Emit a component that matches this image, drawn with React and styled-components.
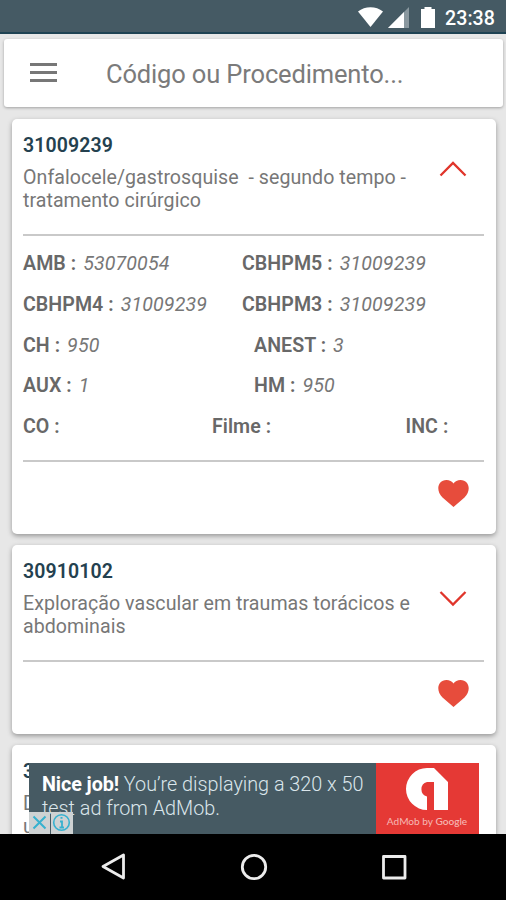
import React from 'react';
import styled, { createGlobalStyle } from 'styled-components';

const GlobalStyle = createGlobalStyle`
  * { box-sizing: border-box; }
  body { margin: 0; background: #e7e7e7; font-family: Roboto, sans-serif; }
`;

const Screen = styled.div`
  position: relative;
  display: flex;
  flex-direction: column;
  width: 506px;
  height: 900px;
  overflow: hidden;
  background: #e7e7e7;
`;

const StatusBar = styled.header`
  display: flex;
  flex: none;
  justify-content: flex-end;
  height: 34px;
  padding-right: 11px;
  background: #455a64;
  border-bottom: 2px solid #1f4353;
  color: #fff;
`;

const StatusIcons = styled.svg`
  width: 82px;
  height: 32px;
  margin-right: 6px;
`;

const Clock = styled.span`
  font-size: 19.6px;
  font-weight: 500;
  line-height: 37px;
  letter-spacing: 0.05px;
`;

const SearchBar = styled.div`
  display: flex;
  flex: none;
  align-items: center;
  height: 68px;
  margin: 5px 3px 0 4px;
  padding: 2px 0 0 26px;
  background: #fff;
  border-radius: 3px;
  box-shadow: 0 1px 3px rgba(0, 0, 0, 0.3);
`;

const MenuButton = styled.button`
  display: flex;
  flex-direction: column;
  gap: 5px;
  width: 76px;
  padding: 0 0 3px;
  border: 0;
  background: none;
`;

const MenuLine = styled.span`
  width: 27px;
  height: 3px;
  background: #777;
`;

const Placeholder = styled.span`
  color: #7b7b7b;
  font-size: 25.5px;
  line-height: 30px;
  letter-spacing: -0.15px;
`;

const Results = styled.main`
  display: flex;
  flex: 1;
  flex-direction: column;
  gap: 11px;
  min-height: 0;
  padding: 12px 10px 0 12px;
  overflow: hidden;
`;

const Card = styled.article`
  flex: none;
  height: ${(p) => p.$height}px;
  padding: 15px 12px 0 11px;
  background: #fff;
  border-radius: 5px;
  box-shadow: 0 2px 5px rgba(0, 0, 0, 0.35);
`;

const CardHeader = styled.div`
  display: flex;
  justify-content: space-between;
  height: 102px;
  border-bottom: 2px solid #c9c9c9;
`;

const Code = styled.h2`
  margin: 0;
  color: #24414f;
  font-size: 19.5px;
  font-weight: 600;
  line-height: 23px;
  letter-spacing: 0.1px;
`;

const Description = styled.p`
  margin: 9px 0 0;
  color: #777;
  font-size: 19.6px;
  line-height: 23px;
  letter-spacing: 0.04px;
  white-space: pre;
`;

const Chevron = styled.svg`
  flex: none;
  width: 28px;
  height: 18px;
  margin: ${(p) => (p.$open ? 26 : 29)}px 17px 0 0;
`;

const Details = styled.div`
  display: flex;
  flex-direction: column;
  height: 226px;
  padding-top: 7px;
  border-bottom: 2px solid #c9c9c9;
`;

const DetailRow = styled.div`
  display: grid;
  grid-template-columns: ${(p) => p.$columns};
  height: 40.8px;
  line-height: 41px;
`;

const Field = styled.div`
  display: flex;
  gap: 7px;
  color: #686868;
  font-size: 19.6px;
  white-space: nowrap;
`;

const Label = styled.span`
  font-weight: 600;
  letter-spacing: 0.05px;
`;

const Value = styled.span`
  color: #777;
  font-style: italic;
  letter-spacing: 0.12px;
`;

const CardActions = styled.div`
  display: flex;
  justify-content: flex-end;
  padding: 17px 14px 0 0;
`;

const HeartIcon = styled.svg`
  width: 33px;
  height: 29px;
`;

const AdBanner = styled.aside`
  position: absolute;
  top: 763px;
  left: 29px;
  display: flex;
  width: 450px;
  height: 71px;
  background: #465a63;
`;

const AdText = styled.p`
  width: 347px;
  margin: 0;
  padding: 10px 0 0 13px;
  color: #dbe6eb;
  font-size: 19.8px;
  font-weight: 300;
  line-height: 23.5px;
  white-space: pre;
`;

const AdLead = styled.strong`
  color: #fff;
  font-weight: 700;
  letter-spacing: -0.1px;
`;

const AdBrand = styled.div`
  display: flex;
  flex-direction: column;
  align-items: center;
  width: 103px;
  padding: 4px 1px 0 0;
  background: #e53935;
`;

const AdLogo = styled.svg`
  width: 44px;
  height: 44px;
`;

const AdCaption = styled.span`
  margin-top: 4px;
  color: #f6b9b6;
  font-family: Lato, sans-serif;
  font-size: 10.1px;
  line-height: 13px;
  white-space: nowrap;
`;

const AdBrandName = styled.span`
  font-weight: 500;
`;

const AdChoices = styled.svg`
  position: absolute;
  bottom: 0;
  left: 0;
  width: 44px;
  height: 22px;
`;

const NavBar = styled.nav`
  display: flex;
  flex: none;
  justify-content: space-between;
  height: 66px;
  padding: 17.5px 97px 0 98px;
  background: #000;
`;

const NavIcon = styled.svg`
  width: 30px;
  height: 30px;
  fill: none;
  stroke: #ececec;
  stroke-width: 2.8;
  stroke-linejoin: round;
`;

const codes = [
  {
    columns: '219px 1fr',
    fields: [['AMB :', '53070054'], ['CBHPM5 :', '31009239']],
  },
  {
    columns: '219px 1fr',
    fields: [['CBHPM4 :', '31009239'], ['CBHPM3 :', '31009239']],
  },
  { columns: '231px 1fr', fields: [['CH :', '950'], ['ANEST :', '3']] },
  { columns: '231px 1fr', fields: [['AUX :', '1'], ['HM :', '950']] },
  { columns: '189px 193.5px 1fr', fields: [['CO :'], ['Filme :'], ['INC :']] },
];

function Toggle({ open }) {
  return (
    <Chevron viewBox="0 0 28 18" $open={open}>
      <path
        d={open ? 'M1.5 15.5 14 3l12.5 12.5' : 'M1.5 3 14 15.5 26.5 3'}
        fill="none"
        stroke="#e0352b"
        strokeWidth="2.3"
      />
    </Chevron>
  );
}

function Favorite() {
  return (
    <CardActions>
      <HeartIcon viewBox="0 0 33 29">
        <path
          d="M16.5 28 5.5 18.5C-1.5 12 .5 1 9.500 1c3 0 5.5 1.3 7 3.5C18 2.300 20.5 1 23.5 1c9 0 11 11 4 17.5Z"
          fill="#e74c3c"
        />
      </HeartIcon>
    </CardActions>
  );
}

function Procedure({ code, text, open, height, rows }) {
  return (
    <Card $height={height}>
      <CardHeader>
        <div>
          <Code>{code}</Code>
          <Description>{text}</Description>
        </div>
        <Toggle open={open} />
      </CardHeader>
      {rows && (
        <Details>
          {rows.map((row, i) => (
            <DetailRow key={i} $columns={row.columns}>
              {row.fields.map(([label, value]) => (
                <Field key={label}>
                  <Label>{label}</Label>
                  {value && <Value>{value}</Value>}
                </Field>
              ))}
            </DetailRow>
          ))}
        </Details>
      )}
      <Favorite />
    </Card>
  );
}

export default function App() {
  return (
    <Screen>
      <GlobalStyle />
      <StatusBar>
        <StatusIcons viewBox="0 0 82 32">
          <path d="M1 11.5C8 5.800 19 5.800 26 11.5L13.500 27Z" fill="#fff" />
          <path d="M52 7v21H31Z" fill="#8a989f" />
          <path d="M47 12v16H31Z" fill="#fff" />
          <path d="M67.5 7h7v2H78v19H64V9h3.5Z" fill="#fff" />
        </StatusIcons>
        <Clock>23:38</Clock>
      </StatusBar>
      <SearchBar>
        <MenuButton aria-label="Menu">
          <MenuLine />
          <MenuLine />
          <MenuLine />
        </MenuButton>
        <Placeholder>Código ou Procedimento...</Placeholder>
      </SearchBar>
      <Results>
        <Procedure
          open
          height={415}
          code="31009239"
          text={'Onfalocele/gastrosquise  - segundo tempo -\ntratamento cirúrgico'}
          rows={codes}
        />
        <Procedure
          height={189}
          code="30910102"
          text={'Exploração vascular em traumas torácicos e\nabdominais'}
        />
        <Procedure height={189} code="3" text={'D\nu'} />
      </Results>
      <AdBanner>
        <AdText>
          <AdLead>Nice job!</AdLead>
          {' You’re displaying a 320 x 50\ntest ad from AdMob.'}
        </AdText>
        <AdBrand>
          <AdLogo viewBox="0 0 44 44">
            <path
              d="M22 43V29.500a7.500 7.500 0 0 1 0-14.500h7V43h14V15L29 1h-7a21 21 0 0 0 0 42Z"
              fill="#fff"
            />
            <path d="M22 15h7v29h-7Z" fill="#e53935" />
          </AdLogo>
          <AdCaption>
            AdMob by <AdBrandName>Google</AdBrandName>
          </AdCaption>
        </AdBrand>
        <AdChoices viewBox="0 0 44 22">
          <path d="M0 0h21v22H0ZM22 0h22v22H22Z" fill="#ced2d3" />
          <path d="M4.5 4.5l12 12m0-12-12 12" stroke="#36b1cf" strokeWidth="2" />
          <circle cx="32.5" cy="10.5" r="7.8" fill="none" stroke="#36b1cf" strokeWidth="1.6" />
          <path d="M31 9.5h2v6m-2.500 0h4.500M31.500 5.800h2" fill="none" stroke="#36b1cf" strokeWidth="1.8" />
        </AdChoices>
      </AdBanner>
      <NavBar>
        <NavIcon viewBox="0 0 30 30">
          <path d="M25.5 3v23L5 14.500Z" />
        </NavIcon>
        <NavIcon viewBox="0 0 30 30">
          <circle cx="15" cy="15" r="11.7" />
        </NavIcon>
        <NavIcon viewBox="0 0 30 30">
          <path d="M4.500 4.500h21.500v21.500H4.500Z" />
        </NavIcon>
      </NavBar>
    </Screen>
  );
}
